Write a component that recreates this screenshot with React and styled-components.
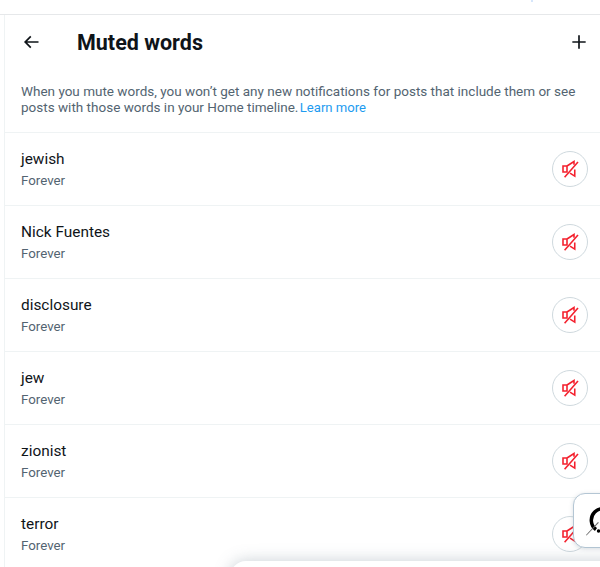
import React from 'react'
import styled, { createGlobalStyle } from 'styled-components'

const GlobalStyle = createGlobalStyle`
  html, body {
    margin: 0;
    padding: 0;
    background: #fff;
    overflow: hidden;
  }
  body {
    font-family: Roboto, "Noto Sans", sans-serif;
    color: #0f1419;
  }
`

const words = ['jewish', 'Nick Fuentes', 'disclosure', 'jew', 'zionist', 'terror']

const MutedIcon = () => (
  <svg width="20" height="20" viewBox="0 0 24 24" fill="none" stroke="#f4212e" strokeWidth="1.900">
    <path d="M3.600 8.400h4.800v7.200H3.600zM8.400 8.400l8.400-5.400v4M17.700 12.500v8L12 17" />
    <path d="M5.500 22 21.600 3.600" />
  </svg>
)

const App = () => (
  <Page>
    <GlobalStyle />
    <TopStrip><TopMark /></TopStrip>
    <Panel>
      <Header>
        <BackSlot>
          <svg width="20" height="20" viewBox="0 0 24 24" fill="#0f1419">
            <path d="M7.414 13l5.043 5.040-1.414 1.420L3.586 12l7.457-7.460 1.414 1.420L7.414 11H21v2H7.414z" />
          </svg>
        </BackSlot>
        <Title>Muted words</Title>
        <PlusSlot>
          <svg width="20" height="20" viewBox="0 0 24 24" fill="#0f1419">
            <path d="M11 11V4h2v7h7v2h-7v7h-2v-7H4v-2h7z" />
          </svg>
        </PlusSlot>
      </Header>
      <Intro>
        When you mute words, you won’t get any new notifications for posts that include them or see
        posts with those words in your Home timeline. <LearnMore>Learn more</LearnMore>
      </Intro>
      {words.map(word => (
        <Row key={word}>
          <div>
            <Word>{word}</Word>
            <Duration>Forever</Duration>
          </div>
          <UnmuteButton><MutedIcon /></UnmuteButton>
        </Row>
      ))}
    </Panel>
    <HelpBadge>
      <svg width="36" height="38" viewBox="0 0 36 38" fill="none">
        <path d="M11 27.500a11.500 11.500 0 1 1 12 1" stroke="#000" strokeWidth="3.500" />
        <path d="M1 33 13 20l.8.800L1.500 33.500z" fill="#666" />
        <circle cx="13.500" cy="29" r="1.700" fill="#000" />
      </svg>
    </HelpBadge>
    <BottomSheet />
  </Page>
)

const Page = styled.div`
  position: relative;
  width: 600px;
  height: 567px;
  overflow: hidden;
  background: #fff;
`

const TopStrip = styled.div`
  position: relative;
  height: 14px;
  border-bottom: 1px solid #e6e8ea;
`

const TopMark = styled.div`
  position: absolute;
  left: 531px;
  top: 0;
  width: 2px;
  height: 2px;
  background: #d6e6fb;
`

const Panel = styled.main`
  margin-left: 4px;
  border-left: 1px solid #eff3f4;
`

const Header = styled.header`
  display: flex;
  align-items: center;
  height: 53px;
  padding: 0 11px 0 17px;
`

const BackSlot = styled.div`
  display: flex;
  width: 56px;
  margin-left: -1px;
`

const PlusSlot = styled.div`
  display: flex;
  margin-left: auto;
`

const Title = styled.h1`
  margin: 0;
  padding-top: 2px;
  font-size: 21.500px;
  line-height: 24px;
  font-weight: 700;
  color: #0f1419;
`

const Intro = styled.p`
  margin: 0;
  padding: 15px 16px 16px;
  font-size: 13.500px;
  line-height: 16px;
  color: #536471;
`

const LearnMore = styled.span`
  margin-left: -2px;
  font-size: 13.100px;
  color: #1d9bf0;
`

const Row = styled.div`
  display: flex;
  align-items: center;
  justify-content: space-between;
  box-sizing: border-box;
  height: 73px;
  padding: 0 12px 0 16px;
  border-top: 1px solid #eff3f4;
`

const Word = styled.div`
  font-size: 15.400px;
  line-height: 20px;
  color: #0f1419;
`

const Duration = styled.div`
  margin-top: 4px;
  font-size: 13.300px;
  line-height: 16px;
  color: #536471;
`

const UnmuteButton = styled.div`
  display: flex;
  align-items: center;
  justify-content: center;
  box-sizing: border-box;
  width: 36px;
  height: 36px;
  border: 1px solid #cfd9de;
  border-radius: 50%;
`

const HelpBadge = styled.div`
  position: absolute;
  left: 573px;
  top: 493px;
  display: flex;
  align-items: center;
  padding-left: 11px;
  width: 60px;
  height: 55px;
  box-sizing: border-box;
  background: #fff;
  border: 1px solid #b4c6d4;
  border-radius: 12px;
  box-shadow: 0 1px 4px rgba(101, 119, 134, 0.25);
`

const BottomSheet = styled.div`
  position: absolute;
  left: 230px;
  top: 561px;
  width: 420px;
  height: 40px;
  background: #fff;
  border-radius: 16px;
  box-shadow: 0 0 16px rgba(101, 119, 134, 0.35);
`

export default App
